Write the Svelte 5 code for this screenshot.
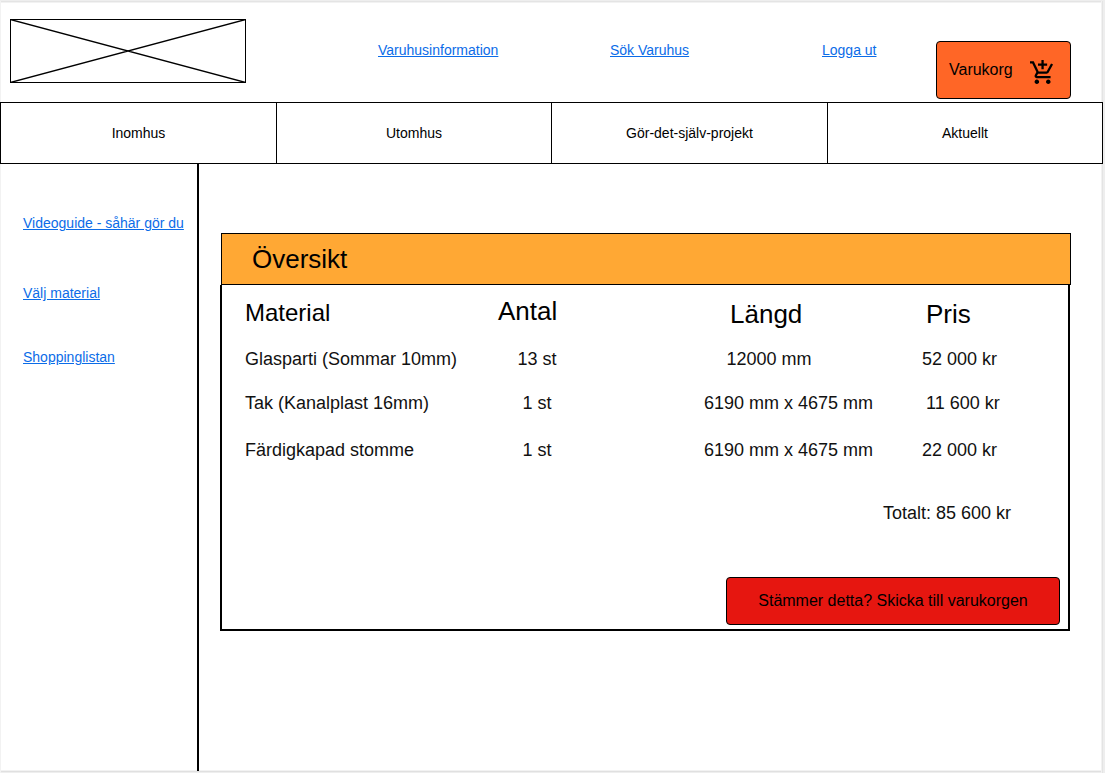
<script>
  const topLinks = [
    { label: 'Varuhusinformation', cls: 'info' },
    { label: 'Sök Varuhus', cls: 'search' },
    { label: 'Logga ut', cls: 'logout' }
  ];
  const tabs = ['Inomhus', 'Utomhus', 'Gör-det-själv-projekt', 'Aktuellt'];
  const guides = ['Videoguide - såhär gör du', 'Välj material', 'Shoppinglistan'];
  const rows = [
    { material: 'Glasparti (Sommar 10mm)', count: '13 st', length: '12000 mm', price: '52 000 kr', short: true },
    { material: 'Tak (Kanalplast 16mm)', count: '1 st', length: '6190 mm x 4675 mm', price: '11 600 kr', inset: true },
    { material: 'Färdigkapad stomme', count: '1 st', length: '6190 mm x 4675 mm', price: '22 000 kr' }
  ];
</script>

<div class="page">
  <header>
    <svg class="logo" width="236" height="64" viewBox="0 0 236 64">
      <rect x="0.5" y="0.5" width="235" height="63" fill="#fff" stroke="#000" />
      <path d="M.5.5l235 63M.5 63.5l235-63" stroke="#000" stroke-width="1.3" />
    </svg>
    {#each topLinks as link}
      <a class={link.cls} href="#top">{link.label}</a>
    {/each}
    <button class="cart">
      <span>Varukorg</span>
      <svg width="24" height="24" viewBox="1 1 21 21">
        <path d="M11 9h2V6h3V4h-3V1h-2v3H8v2h3v3zm-4 9c-1.1 0-1.99.9-1.99 2S5.9 22 7 22s2-.9 2-2-.9-2-2-2zm10 0c-1.1 0-1.99.9-1.99 2s.89 2 1.99 2 2-.9 2-2-.9-2-2-2zm-9.83-3.25l.03-.12.9-1.63h7.45c.75 0 1.41-.41 1.75-1.03l3.86-7.01L19.42 4h-.01l-1.1 2-2.76 5H8.53l-.13-.27L6.16 6l-.95-2-.94-2H1v2h2l3.6 7.59-1.35 2.45c-.16.28-.25.61-.25.96 0 1.1.9 2 2 2h12v-2H7.42c-.13 0-.25-.11-.25-.25z" />
      </svg>
    </button>
  </header>

  <nav>
    {#each tabs as tab}
      <div class="tab">{tab}</div>
    {/each}
  </nav>

  <div class="columns">
    <aside>
      {#each guides as guide}
        <a href="#guide">{guide}</a>
      {/each}
    </aside>
    <main>
      <h1>Översikt</h1>
      <section>
        <div class="row head">
          <span class="h-material">Material</span>
          <span class="h-count">Antal</span>
          <span class="h-length">Längd</span>
          <span class="h-price">Pris</span>
        </div>
        {#each rows as row}
          <div class="row">
            <span>{row.material}</span>
            <span class="count">{row.count}</span>
            <span class="length" class:short={row.short}>{row.length}</span>
            <span class="price" class:inset={row.inset}>{row.price}</span>
          </div>
        {/each}
        <div class="total">Totalt: 85 600 kr</div>
        <button class="send">Stämmer detta? Skicka till varukorgen</button>
      </section>
    </main>
  </div>
</div>

<style>
  :global(body) {
    margin: 0;
    background: #eee;
    overflow: hidden;
  }
  .page {
    box-sizing: border-box;
    width: 1103px;
    height: 772px;
    margin-top: 1px;
    display: flex;
    flex-direction: column;
    background: linear-gradient(#f2f2f2, #f2f2f2) left / 1px 100% no-repeat,
      linear-gradient(#f2f2f2, #f2f2f2) 1101px 0 / 1px 100% no-repeat,
      linear-gradient(#e4e4e4, #e4e4e4) 1102px 0 / 1px 100% no-repeat,
      linear-gradient(#e4e4e4, #e4e4e4) 0 0 / 100% 1px no-repeat,
      linear-gradient(#f2f2f2, #f2f2f2) 0 1px / 100% 1px no-repeat,
      linear-gradient(#f2f2f2, #f2f2f2) 0 769px / 100% 1px no-repeat,
      linear-gradient(#e0e0e0, #e0e0e0) 0 770px / 100% 1px no-repeat,
      linear-gradient(#eee, #eee) 0 771px / 100% 1px no-repeat, #fff;
    font-family: 'Liberation Sans', Arial, sans-serif;
    font-size: 14px;
    line-height: 20px;
    color: #000;
  }
  a {
    color: #0b6ce8;
    text-decoration: underline;
    white-space: nowrap;
  }
  header {
    height: 101px;
    flex: none;
    display: flex;
    align-items: flex-start;
    padding-left: 10px;
  }
  header a {
    margin-top: 39px;
  }
  .logo {
    margin-top: 18px;
    flex: none;
  }
  .info {
    margin-left: 132px;
    width: 120px;
  }
  .search {
    margin-left: 112px;
    width: 79px;
  }
  .logout {
    margin-left: 133px;
    width: 55px;
  }
  button {
    box-sizing: border-box;
    border: 1px solid #000;
    border-radius: 4px;
    font: 16px/20px 'Liberation Sans', Arial, sans-serif;
    color: #000;
    white-space: nowrap;
  }
  .cart {
    margin: 40px 0 0 59px;
    width: 135px;
    height: 58px;
    padding: 3px 0 0 12px;
    display: flex;
    align-items: center;
    background: #ff6626;
  }
  .cart span {
    width: 81px;
    text-align: left;
    margin-top: -4px;
  }
  nav {
    box-sizing: border-box;
    flex: none;
    height: 62px;
    display: grid;
    grid-template-columns: 276px 275px 276px 276px;
    border-top: 1px solid #000;
    border-bottom: 1px solid #000;
    background: #fff;
  }
  .tab {
    display: flex;
    align-items: center;
    justify-content: center;
    border-left: 1px solid #000;
  }
  .tab:last-child {
    border-right: 1px solid #000;
  }
  .columns {
    height: 607px;
    display: flex;
  }
  aside {
    box-sizing: border-box;
    width: 199px;
    flex: none;
    padding: 49px 0 0 23px;
    border-right: 2px solid #000;
    display: flex;
    flex-direction: column;
    align-items: flex-start;
  }
  aside a + a {
    margin-top: 50px;
  }
  aside a:last-child {
    margin-top: 44px;
  }
  main {
    padding: 69px 0 0 21px;
  }
  h1 {
    box-sizing: border-box;
    width: 850px;
    height: 52px;
    margin: 0 0 0 1px;
    padding: 10px 0 0 30px;
    border: 1px solid #000;
    background: #ffa834;
    font-size: 26px;
    font-weight: 400;
    line-height: 30px;
  }
  section {
    box-sizing: border-box;
    width: 850px;
    height: 346px;
    border: 2px solid #000;
    border-top: 0;
    display: flex;
    flex-direction: column;
  }
  .row {
    display: grid;
    grid-template-columns: 253px 206px 218px auto;
    padding-left: 23px;
    font-size: 18px;
    height: 20px;
    margin-bottom: 24px;
    color: #111;
    white-space: nowrap;
  }
  .row:nth-child(3) {
    margin-bottom: 27px;
  }
  .row.head {
    height: 51px;
    padding-top: 11px;
    margin: 0 0 2px;
    font-size: 26px;
    line-height: 30px;
    color: #000;
  }
  .h-material {
    font-size: 24px;
    margin-top: 2px;
  }
  .h-length {
    padding-left: 26px;
    margin-top: 3px;
  }
  .h-price {
    padding-left: 4px;
    margin-top: 3px;
  }
  .count {
    width: 78px;
    text-align: center;
  }
  .length.short {
    padding-left: 22.5px;
  }
  .price.inset {
    padding-left: 4px;
  }
  .total {
    margin: 19px 57px 0 0;
    font-size: 18px;
    color: #111;
    text-align: right;
  }
  .send {
    width: 334px;
    height: 48px;
    margin: 54px 8px 0 auto;
    padding: 0;
    background: #e61610;
  }
</style>
